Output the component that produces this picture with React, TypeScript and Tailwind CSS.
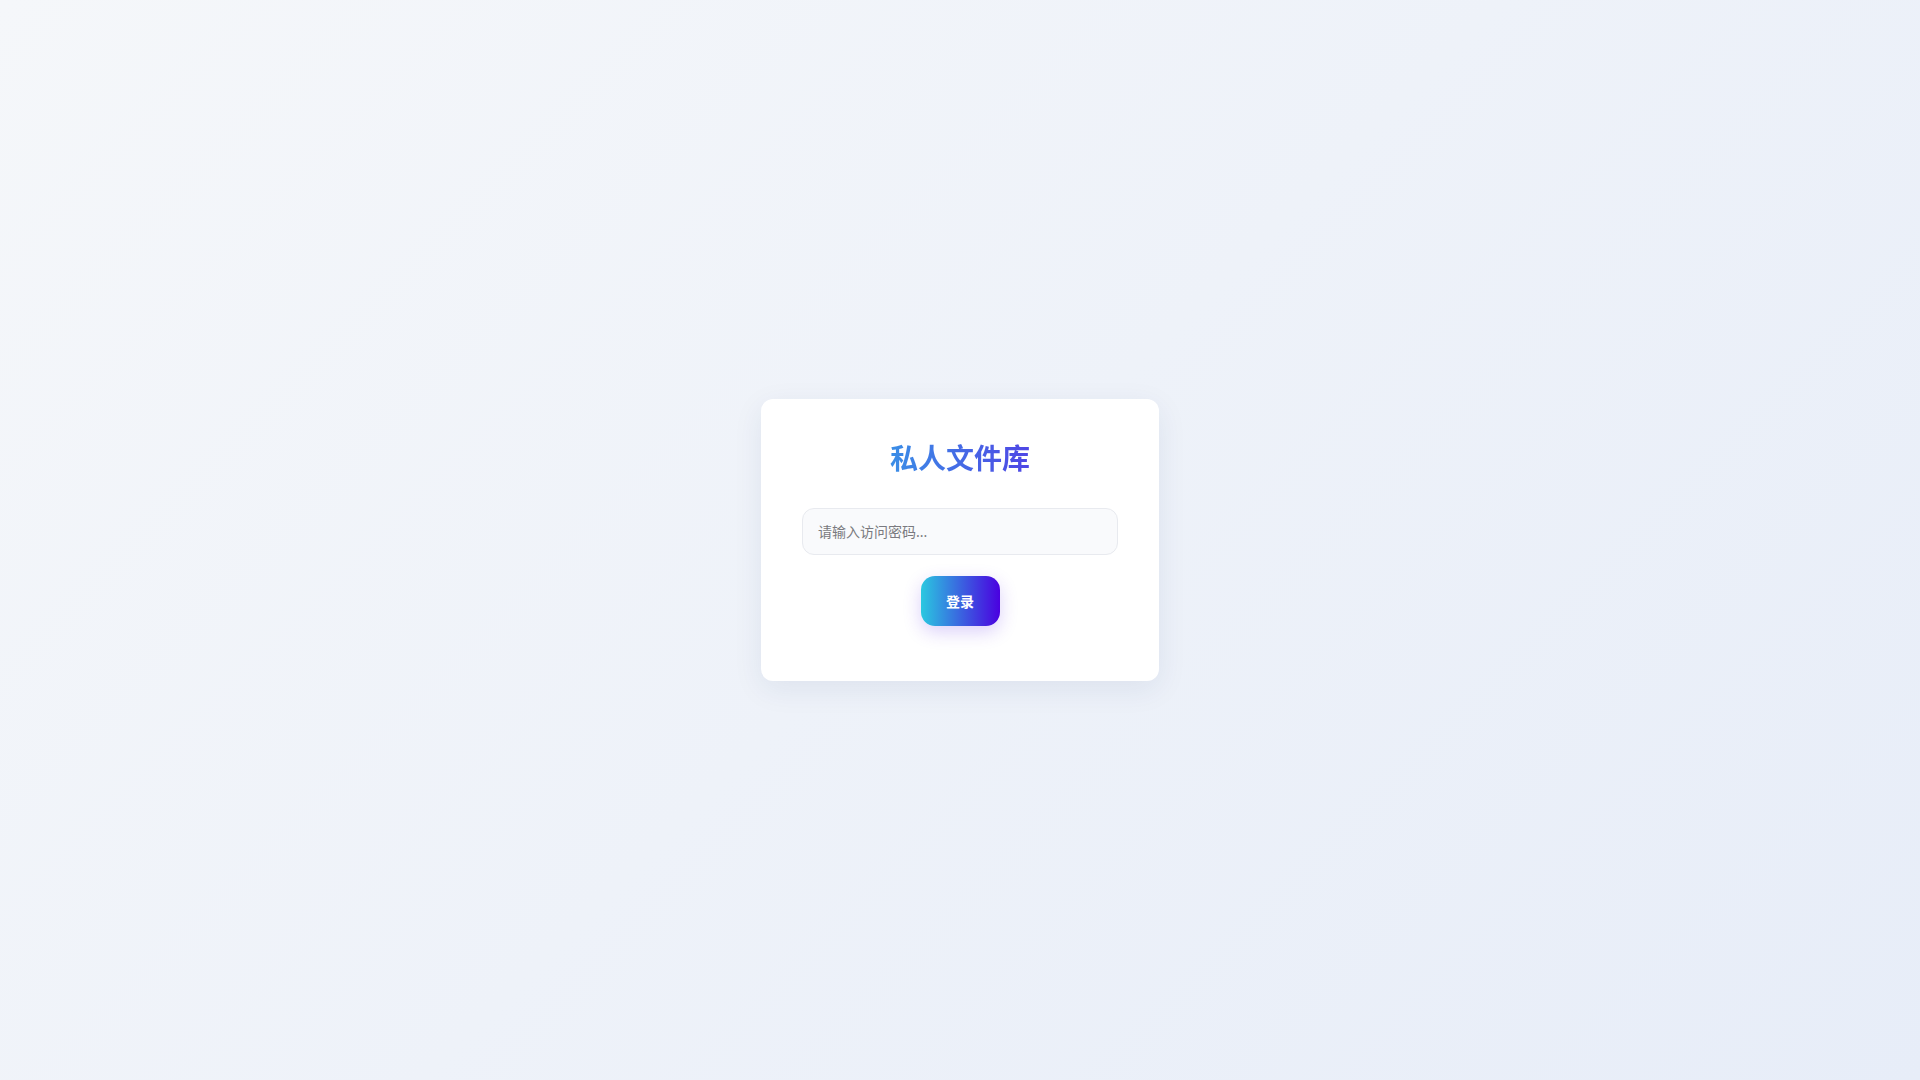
import React from "react";

export default function App() {
  return (
    <div
      className="min-h-screen w-full flex items-center justify-center bg-[linear-gradient(135deg,#f5f7fa_0%,#e7edf8_100%)]"
      style={{ fontFamily: '"Noto Sans", "Noto Sans CJK SC", sans-serif' }}
    >
      <div className="w-[398px] bg-white rounded-xl shadow-[0_8px_30px_rgba(30,50,100,0.08)] px-[41px] pt-[38px] pb-[55px] flex flex-col items-center">
        <h1 className="text-[28px] leading-[42px] font-bold bg-[linear-gradient(90deg,#3a8ee6,#4f46e5)] bg-clip-text text-transparent">
          私人文件库
        </h1>
        <input
          type="password"
          placeholder="请输入访问密码..."
          className="mt-[29px] w-full h-[47px] rounded-xl border border-[#e8eaef] bg-[#f9fafc] px-[15px] text-[14px] text-gray-700 placeholder:text-[#7a7a80] outline-none"
        />
        <button className="mt-[21px] w-[79px] h-[50px] rounded-[14px] bg-[linear-gradient(90deg,#2ac8e0,#4a00e0)] text-white text-[14px] font-bold shadow-[0_6px_18px_rgba(90,40,230,0.22)]">
          登录
        </button>
      </div>
    </div>
  );
}
